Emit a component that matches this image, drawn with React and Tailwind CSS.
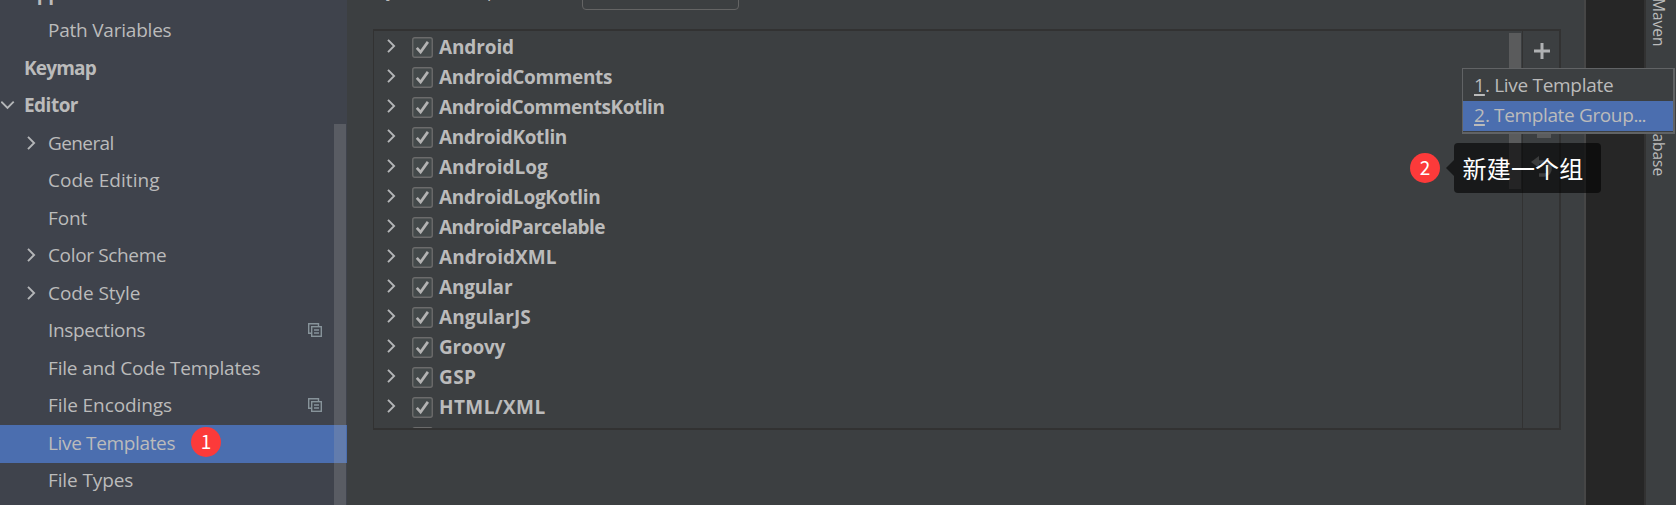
const settings = [
  { label: "Appearance & Behavior", root: true, expanded: true, tracking: "tracking-[-0.4px] -mt-0.5" },
  { label: "Path Variables", tracking: "tracking-[-0.22px]" },
  { label: "Keymap", root: true, tracking: "tracking-[-0.8px]" },
  { label: "Editor", root: true, expanded: true, tracking: "tracking-[-0.52px]" },
  { label: "General", group: true, tracking: "tracking-[-0.6px]" },
  { label: "Code Editing", tracking: "tracking-[0.03px]" },
  { label: "Font", tracking: "tracking-[-0.1px]" },
  { label: "Color Scheme", group: true, tracking: "tracking-[-0.35px]" },
  { label: "Code Style", group: true, tracking: "tracking-[-0.03px]" },
  { label: "Inspections", project: true, tracking: "tracking-[-0.36px]" },
  { label: "File and Code Templates", tracking: "tracking-[-0.18px]" },
  { label: "File Encodings", project: true, tracking: "tracking-[-0.08px]" },
  { label: "Live Templates", selected: true, tracking: "tracking-[-0.35px]" },
  { label: "File Types", tracking: "tracking-[-0.12px]" },
];

const templateGroups = [
  { name: "Android", tracking: "tracking-[-0.12px]" },
  { name: "AndroidComments", tracking: "tracking-[-0.36px]" },
  { name: "AndroidCommentsKotlin", tracking: "tracking-[-0.46px]" },
  { name: "AndroidKotlin", tracking: "tracking-[-0.35px]" },
  { name: "AndroidLog", tracking: "tracking-[-0.05px]" },
  { name: "AndroidLogKotlin", tracking: "tracking-[-0.27px]" },
  { name: "AndroidParcelable", tracking: "tracking-[-0.54px]" },
  { name: "AndroidXML", tracking: "tracking-[0.03px]" },
  { name: "Angular", tracking: "tracking-[-0.2px]" },
  { name: "AngularJS", tracking: "tracking-[0.04px]" },
  { name: "Groovy", tracking: "tracking-[-0.25px]" },
  { name: "GSP", tracking: "tracking-[0.4px]" },
  { name: "HTML/XML", tracking: "tracking-[0.4px]" },
  { name: "", tracking: "" },
];

function ChevronRight() {
  return (
    <svg className="h-[14px] w-[10px] shrink-0" viewBox="0 0 10 14" fill="none" stroke="#b4b6b8" strokeWidth="1.9">
      <path d="M2 .8 8.1 7 2 13.2" />
    </svg>
  );
}

function ChevronDown() {
  return (
    <svg className="h-[9px] w-[14px] shrink-0" viewBox="0 0 14 9" fill="none" stroke="#b4b6b8" strokeWidth="1.9">
      <path d="M.3 .7 6.5 6.9 12.7 .7" />
    </svg>
  );
}

function ProjectIcon() {
  return (
    <svg className="h-[15px] w-[15px]" viewBox="0 0 15 15" fill="none" stroke="#87939a" strokeWidth="1.4">
      <path d="M3 10.3H.7V.7h9.8v2.4" />
      <rect x="3.7" y="3.7" width="9.6" height="9.6" />
      <path d="M6 7h5M6 10h5" />
    </svg>
  );
}

function Checkbox() {
  return (
    <svg className="h-[21px] w-[21px] shrink-0" viewBox="0 0 21 21" fill="none">
      <rect x=".75" y=".75" width="19.5" height="19.5" rx="2" fill="#43494a" stroke="#6b6b6b" strokeWidth="1.4" />
      <path d="m4.8 10.8 3.8 4.3 7.3-10.2" stroke="#b3b3b3" strokeWidth="2.7" />
    </svg>
  );
}

function SettingRow({ item }) {
  return (
    <li
      className={
        item.selected
          ? "flex h-[37.5px] items-center bg-[#4b6eaf]"
          : "flex h-[37.5px] items-center"
      }
    >
      <span className={item.root ? "-mt-0.5 flex w-6 pl-px" : "-mt-0.5 flex w-12 pl-[26px]"}>
        {item.root && item.expanded && <ChevronDown />}
        {item.group && <ChevronRight />}
      </span>
      <span className={`${item.root ? "-mt-0.5 font-bold" : "-mt-0.5"} ${item.tracking}`}>{item.label}</span>
      {item.project && (
        <span className="-mt-0.5 mr-[24px] ml-auto">
          <ProjectIcon />
        </span>
      )}
    </li>
  );
}

function Badge({ children, className }) {
  return (
    <span
      className={`absolute flex size-[30px] items-center justify-center rounded-full bg-[#fc3a3a] pb-[3px] font-['Noto_Sans_CJK_SC',sans-serif] text-[19px] leading-none text-white ${className}`}
    >
      {children}
    </span>
  );
}

function Sidebar() {
  return (
    <nav className="relative flex w-[347px] shrink-0 overflow-hidden bg-[#3f434c]">
      <ul className="-mt-[25px] h-[525px] w-full shrink-0">
        {settings.map((item) => (
          <SettingRow key={item.label} item={item} />
        ))}
      </ul>
      <div className="absolute top-[124px] right-px bottom-0 w-3 bg-[#a6a6a6]/25" />
      <Badge className="top-[427px] left-[191px]">1</Badge>
    </nav>
  );
}

function Toolbar() {
  return (
    <div className="flex w-[37px] shrink-0 flex-col items-center border-l border-[#323232] pt-3 pl-px">
      <svg className="h-4 w-4 shrink-0" viewBox="0 0 16 16">
        <path d="M6.5 0h3v6.5H16v3H9.5V16h-3V9.5H0v-3h6.5z" fill="#afb1b3" />
      </svg>
      <svg className="mt-[63px] ml-1 h-4 w-3.5 shrink-0" viewBox="0 0 14 16">
        <path d="M0 0h14v16H0z" fill="#5b5c5d" />
      </svg>
      <svg className="mt-[18px] h-[22px] w-[22px] shrink-0" viewBox="0 0 22 22">
        <path d="M0 6 8 0v12z" fill="#96989a" />
        <path d="M7 6h6.5c7.5 0 7.5 13 0 13H8" fill="none" stroke="#96989a" strokeWidth="3.4" />
      </svg>
    </div>
  );
}

function TemplatePanel() {
  return (
    <section className="flex h-[401px] w-[1188px] overflow-hidden border-2 border-l border-[#323232]">
      <ul className="flex-1 overflow-hidden pt-px">
        {templateGroups.map((group) => (
          <li key={group.name} className="flex h-[30px] items-center pl-3">
            <span className="-mt-0.5 flex">
              <ChevronRight />
            </span>
            <span className="ml-[15.5px] flex">
              <Checkbox />
            </span>
            <span className={`-mt-px ml-[6.5px] font-bold ${group.tracking}`}>{group.name}</span>
          </li>
        ))}
      </ul>
      <div className="mt-0.5 mr-px h-[156px] w-3 bg-[#5a5b5c]" />
      <Toolbar />
    </section>
  );
}

function AddMenu() {
  return (
    <div className="absolute top-[68px] left-[1462px] flex h-[66px] w-[213px] flex-col border border-r-2 border-b-2 border-[#616365] bg-[#3c3f41] pt-0.5">
      <div className="flex h-[30px] items-center pb-[3px] pl-[11px]">
        <span className="underline decoration-2 underline-offset-2">1</span>
        <span className="tracking-[-0.3px] whitespace-pre">. Live Template</span>
      </div>
      <div className="flex h-[30px] items-center bg-[#4b6eaf] pb-[3px] pl-[11px]">
        <span className="underline decoration-2 underline-offset-2">2</span>
        <span className="tracking-[-0.36px] whitespace-pre">. Template Group</span>
        <span className="tracking-[-0.9px]">...</span>
      </div>
    </div>
  );
}

function Tooltip() {
  return (
    <div className="absolute top-[143px] left-[1446px] flex items-center">
      <svg className="h-4 w-2" viewBox="0 0 8 16">
        <path d="M8 0v16L0 8z" fill="#000" fillOpacity=".6" />
      </svg>
      <div className="flex h-[50px] w-[147px] items-center rounded bg-black/60 pb-px pl-[8.5px] font-['Noto_Sans_CJK_SC',sans-serif] text-2xl leading-none tracking-[0.2px] whitespace-nowrap text-white">
        新建一个组
      </div>
    </div>
  );
}

function ToolWindowBar() {
  return (
    <aside className="relative w-8 shrink-0 overflow-hidden border-l-2 border-[#323232] bg-[#3c3f41] text-[15.5px]">
      <div className="-mt-0.5 flex h-[178px] flex-col justify-between pl-px leading-6 [writing-mode:vertical-rl]">
        <div className="flex justify-between">
          <span>Maven</span>
          <span>Database</span>
        </div>
      </div>
    </aside>
  );
}

export default function App() {
  return (
    <div className="relative flex h-[505px] w-[1676px] overflow-hidden bg-[#262626] font-['Open_Sans','Noto_Sans',sans-serif] text-[19px] leading-[30px] text-[#bbbbbb]">
      <Sidebar />
      <main className="flex w-[1239px] shrink-0 flex-col border-r-2 border-[#464646] bg-[#3c3f41] pl-[26px]">
        <div className="flex h-[29px] shrink-0 items-start">
          <span className="-mt-[25px] w-[209px] pl-px tracking-[-0.15px]">By default expand with</span>
          <div className="-mt-5 h-[30px] w-[157px] rounded border border-[#646464]" />
        </div>
        <TemplatePanel />
      </main>
      <div className="flex-1" />
      <ToolWindowBar />
      <AddMenu />
      <Badge className="top-[153px] left-[1410px]">2</Badge>
      <Tooltip />
    </div>
  );
}
